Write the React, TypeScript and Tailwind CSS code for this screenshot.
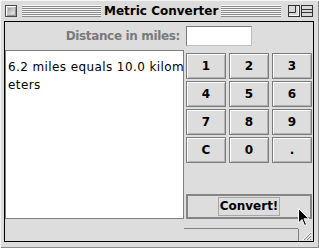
import clsx from 'clsx';

const keys = ['1', '2', '3', '4', '5', '6', '7', '8', '9', 'C', '0', '.'];

function Stripes({ className }: { className?: string }) {
  return (
    <div
      className={clsx(
        'h-[12px] bg-[repeating-linear-gradient(to_bottom,#f6f6f6_0px,#f6f6f6_1px,#8a8a8a_1px,#8a8a8a_2px)]',
        className,
      )}
    />
  );
}

function CloseBox() {
  return (
    <div className="w-[12px] h-[12px] border border-[#4a4a4a] bg-[#c8c8c8] shadow-[inset_1px_1px_0_#ffffff,inset_-1px_-1px_0_#999999] flex items-center justify-center">
      <div className="w-[6px] h-[6px] bg-[linear-gradient(135deg,#9a9a9a,#eeeeee)]" />
    </div>
  );
}

function ZoomBox() {
  return (
    <svg width="12" height="12" viewBox="0 0 12 12">
      <rect x="0.5" y="0.5" width="11" height="11" fill="#d8d8d8" stroke="#333" />
      <path d="M1.5 10.5 H10.5 V1.5" stroke="#fff" fill="none" />
      <path d="M7.5 1 V7.5 H1" stroke="#333" fill="none" />
    </svg>
  );
}

function CollapseBox() {
  return (
    <svg width="12" height="12" viewBox="0 0 12 12">
      <rect x="0.5" y="0.5" width="11" height="11" fill="#d8d8d8" stroke="#333" />
      <path d="M1 4.5 H11 M1 7.5 H11" stroke="#333" fill="none" />
    </svg>
  );
}

function GrowBox() {
  return (
    <svg width="12" height="12" viewBox="0 0 12 12">
      <path d="M3 11 L11 3 M6 11 L11 6 M9 11 L11 9" stroke="#ffffff" strokeWidth="1" />
      <path d="M4 11 L11 4 M7 11 L11 7 M10 11 L11 10" stroke="#808080" strokeWidth="1" />
    </svg>
  );
}

function Cursor() {
  return (
    <svg width="12" height="19" viewBox="0 0 12 19" className="absolute left-[298px] top-[208px]">
      <path
        d="M0.5 0.5 L0.5 15 L4 11.5 L6.5 17.5 L8.5 16.6 L6 10.8 L11 10.8 Z"
        fill="#000"
        stroke="#fff"
        strokeWidth="1"
      />
    </svg>
  );
}

export default function App() {
  return (
    <div className="relative w-[319px] h-[248px] bg-[#dcdcdc] shadow-[inset_1px_1px_0_#f4f4f4,inset_-1px_-1px_0_#8a8a8a] overflow-hidden font-['DejaVu_Sans',sans-serif]">
      {/* title bar */}
      <div className="h-[21px] flex items-center pl-[5px] pr-[6px]">
        <CloseBox />
        <Stripes className="ml-[5px] w-[79px]" />
        <span className="px-[3px] text-[12px] font-bold text-black leading-none whitespace-nowrap">
          Metric Converter
        </span>
        <Stripes className="flex-1" />
        <div className="ml-[7px] flex gap-[1px]">
          <ZoomBox />
          <CollapseBox />
        </div>
      </div>

      {/* content */}
      <div className="ml-[4px] w-[310px] h-[221px] border border-black bg-[#dddddd] flex flex-col">
        <div className="h-[29px] flex items-center">
          <span className="w-[175px] text-right text-[12px] font-bold tracking-[-0.35px] text-[#7a7a7a] whitespace-nowrap">
            Distance in miles:
          </span>
          <div className="ml-[6px] w-[66px] h-[20px] bg-white border border-[#7a7a7a] border-r-[#bdbdbd] border-b-[#bdbdbd]" />
        </div>

        <div className="flex h-[174px]">
          <div className="w-[179px] h-full bg-white border border-[#7f7f7f] pl-[2px] pt-[7px] text-[12px] leading-[18px] tracking-[0.4px] text-black whitespace-nowrap">
            <div>6.2 miles equals 10.0 kilom</div>
            <div>eters</div>
          </div>

          <div className="ml-[2px] w-[126px] flex flex-col pt-[3px]">
            <div className="grid grid-cols-3 gap-x-[3px] gap-y-[2px]">
              {keys.map((k) => (
                <button
                  key={k}
                  className="h-[26px] bg-[#dddddd] border border-[#7b7b7b] shadow-[inset_1px_1px_0_#ffffff,inset_-1px_-1px_0_#b4b4b4] text-[12px] font-bold text-black leading-none flex items-center justify-center"
                >
                  {k}
                </button>
              ))}
            </div>
            <button className="mt-auto h-[25px] w-full bg-[#dddddd] border-2 border-[#858585] flex items-center justify-center">
              <span className="px-[1px] h-[19px] border border-[#a8a8a8] text-[12px] font-bold text-black leading-[17px]">
                Convert!
              </span>
            </button>
          </div>
        </div>

        {/* bottom strip with grow box */}
        <div className="flex-1 flex">
          <div className="ml-[179px] w-[114px] h-[10px] border-b border-[#7f7f7f]" />
          <div className="w-[15px] flex flex-col">
            <div className="h-[10px]" />
            <div className="flex-1 border-l border-[#7f7f7f] flex items-end justify-end pr-[1px]">
              <GrowBox />
            </div>
          </div>
        </div>
      </div>

      <Cursor />
    </div>
  );
}
